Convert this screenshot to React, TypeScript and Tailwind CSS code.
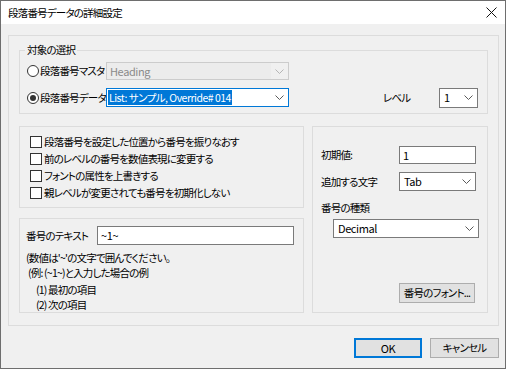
import React from 'react';

const font = "font-['Noto_Sans_CJK_JP',sans-serif] [font-feature-settings:'palt']";
const jp = 'text-[10.5px] tracking-[-0.8px] whitespace-nowrap';
const en = 'text-[11px] tracking-[-0.4px] whitespace-nowrap';

const Chevron = ({ color = '#5a5a5a' }: { color?: string }) => (
  <svg width="9" height="5" viewBox="0 0 9 5" fill="none">
    <path d="M0.5 0.5L4.5 4.5L8.5 0.5" stroke={color} strokeWidth="1" />
  </svg>
);

const GroupBox = ({ label, className, children }: { label?: string; className: string; children?: React.ReactNode }) => (
  <div className={`relative border border-[#dcdcdc] ${className}`}>
    {label && (
      <span className={`absolute -top-[9px] left-[5px] bg-[#f0f0f0] px-[2px] leading-[16px] ${jp}`}>{label}</span>
    )}
    {children}
  </div>
);

const Combo = ({ text, className }: { text: string; className: string }) => (
  <div className={`flex items-center border border-[#7a7a7a] bg-white ${className}`}>
    <span className={`flex-1 pl-[4px] leading-none ${en}`}>{text}</span>
    <span className="flex w-[17px] justify-center">
      <Chevron />
    </span>
  </div>
);

const Radio = ({ checked }: { checked?: boolean }) => (
  <span className="flex h-[12px] w-[12px] shrink-0 items-center justify-center rounded-full border border-[#333] bg-white">
    {checked && <span className="h-[6px] w-[6px] rounded-full bg-[#333]" />}
  </span>
);

const Check = ({ label }: { label: string }) => (
  <div className="flex h-[17px] items-center">
    <span className="h-[12px] w-[12px] border border-[#333] bg-white" />
    <span className={`ml-[2px] ${jp}`}>{label}</span>
  </div>
);

const Button = ({ label, className }: { label: string; className: string }) => (
  <div className={`flex items-center justify-center bg-[#e1e1e1] whitespace-nowrap ${className}`}>{label}</div>
);

export default function App() {
  return (
    <div className={`flex h-[369px] w-[506px] flex-col border border-[#6e6e6e] bg-[#f0f0f0] text-black ${font}`}>
      <div className="flex h-[23px] shrink-0 items-center bg-white pl-[7px] pr-[8px]">
        <span className={jp}>段落番号データの詳細設定</span>
        <svg className="ml-auto" width="11" height="11" viewBox="0 0 11 11">
          <path d="M0.5 0.5L10.5 10.5M10.5 0.5L0.5 10.5" stroke="#111" strokeWidth="1" />
        </svg>
      </div>

      <div className="pl-[7px] pt-[11px]">
        <div className="h-[291px] w-[491px] border border-[#dcdcdc] px-[10px] pt-[14px]">
          <GroupBox label="対象の選択" className="h-[64px] pl-[7px] pt-[11px]">
            <div className="flex h-[18px] items-center">
              <Radio />
              <span className={`ml-[1px] w-[66px] overflow-hidden ${jp}`}>段落番号マスタ</span>
              <div className="flex h-[18px] w-[183px] items-center border border-[#cccccc] bg-[#f0f0f0]">
                <span className={`flex h-full flex-1 items-center bg-[#ececec] pl-[3px] text-[#8a8a8a] ${en}`}>Heading</span>
                <span className="flex w-[17px] justify-center">
                  <Chevron color="#b5b5b5" />
                </span>
              </div>
            </div>
            <div className="mt-[8px] flex h-[19px] items-center">
              <Radio checked />
              <span className={`ml-[1px] w-[66px] ${jp}`}>段落番号データ</span>
              <div className="flex h-[19px] w-[183px] items-center border border-[#0078d7] bg-white">
                <span className="ml-[1px] flex h-[15px] items-center bg-[#0078d7] px-[1px] text-[10.5px] tracking-[-0.5px] whitespace-nowrap text-white">
                  List: サンプル, Override# 014
                </span>
                <span className="ml-auto flex w-[17px] justify-center">
                  <Chevron />
                </span>
              </div>
              <span className={`ml-[94px] w-[56px] ${jp}`}>レベル</span>
              <Combo text="1" className="h-[20px] w-[39px]" />
            </div>
          </GroupBox>

          <div className="mt-[12px] flex gap-[8px]">
            <div className="flex w-[285px] flex-col">
              <GroupBox className="h-[82px] pl-[10px] pt-[6px]">
                <Check label="段落番号を設定した位置から番号を振りなおす" />
                <Check label="前のレベルの番号を数値表現に変更する" />
                <Check label="フォントの属性を上書きする" />
                <Check label="親レベルが変更されても番号を初期化しない" />
              </GroupBox>

              <GroupBox className="mt-[10px] h-[95px] pl-[6px] pt-[7px]">
                <div className="flex h-[19px] items-center">
                  <span className={`w-[71px] ${jp}`}>番号のテキスト</span>
                  <div className={`flex h-[19px] w-[197px] items-center border border-[#7a7a7a] bg-white pl-[3px] ${en}`}>
                    ~1~
                  </div>
                </div>
                <div className={`mt-[5px] leading-[15px] ${jp}`}>
                  <div>(数値は'~'の文字で囲んでください。</div>
                  <div className="pl-[2px]">(例: (~1~)と入力した場合の例</div>
                  <div className="mt-[2px] pl-[10px]">(1) 最初の項目</div>
                  <div className="pl-[10px]">(2) 次の項目</div>
                </div>
              </GroupBox>
            </div>

            <GroupBox className="h-[187px] w-[176px] pl-[8px] pt-[19px]">
              <div className="flex h-[18px] items-center">
                <span className={`w-[78px] ${jp}`}>初期値:</span>
                <div className={`flex h-[18px] w-[77px] items-center border border-[#7a7a7a] bg-white pl-[3px] ${en}`}>1</div>
              </div>
              <div className="mt-[8px] flex h-[19px] items-center">
                <span className={`w-[78px] ${jp}`}>追加する文字</span>
                <Combo text="Tab" className="h-[19px] w-[77px]" />
              </div>
              <div className={`mt-[9px] flex h-[16px] items-center ${jp}`}>番号の種類</div>
              <Combo text="Decimal" className="ml-[12px] mt-[3px] h-[19px] w-[146px]" />
              <Button label="番号のフォント..." className={`ml-[78px] mt-[45px] h-[20px] w-[76px] border border-[#adadad] ${jp}`} />
            </GroupBox>
          </div>
        </div>

        <div className="mt-[12px] flex justify-end gap-[8px] pr-[6px]">
          <Button label="OK" className={`h-[20px] w-[68px] border-2 border-[#0078d7] ${en}`} />
          <Button label="キャンセル" className={`h-[20px] w-[69px] border border-[#adadad] ${jp}`} />
        </div>
      </div>
    </div>
  );
}
